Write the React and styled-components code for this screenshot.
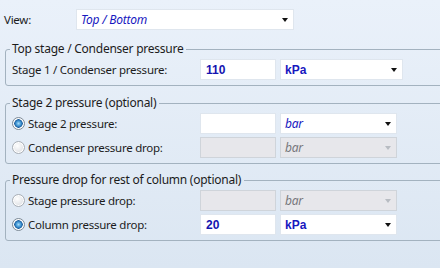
import React from 'react'
import styled, { createGlobalStyle } from 'styled-components'

const Global = createGlobalStyle`
    html, body {
        margin: 0;
        padding: 0;
    }
    body {
        font-family: "Noto Sans", "Open Sans", sans-serif;
        font-size: 11.5px;
        letter-spacing: -0.25px;
        color: #1c1c1c;
    }
`;

const Panel = styled.div`
    width: 440px;
    height: 268px;
    box-sizing: border-box;
    padding: 9px 0 0 4px;
    overflow: hidden;
    background: linear-gradient(#eaf1fa, #dbe6f2);
`;

const ViewRow = styled.div`
    display: flex;
    align-items: center;
    height: 21px;
    margin-bottom: 11px;
`;

const ViewLabel = styled.span`
    width: 72px;
`;

const Group = styled.fieldset`
    width: 460px;
    margin: 0 0 ${props => props.gap || 0}px 1px;
    padding: 2px 0 5px 6px;
    border: 1px solid #a3b2bf;
    border-radius: 3px;
    box-sizing: border-box;
    display: flex;
    flex-direction: column;
    gap: 3px;
`;

const Legend = styled.legend`
    margin-left: -2px;
    padding: 0 3px 0 2px;
    line-height: 16px;
    font-size: 12px;
`;

const Row = styled.div`
    display: flex;
    align-items: center;
    height: 21px;
`;

const Label = styled.label`
    width: 188px;
    display: flex;
    align-items: center;
    gap: 3px;
`;

const Radio = styled.span`
    width: 13px;
    height: 13px;
    box-sizing: border-box;
    border-radius: 50%;
    border: 1px solid ${props => props.checked ? '#7d8a96' : '#a9afb6'};
    background: ${props => props.checked
        ? 'radial-gradient(circle at 50% 50%, #a6dcf8 0, #3f95d4 2.5px, #1f5f9e 4px, #e9eef2 4.6px, #f6f8fa 100%)'
        : 'radial-gradient(circle at 40% 35%, #ffffff 0, #e4e6e9 60%, #d2d5d9 100%)'};
    box-shadow: inset 0 0 0 1px #ffffff;
`;

const TextBox = styled.div`
    width: 76px;
    height: 21px;
    box-sizing: border-box;
    padding: 0 5px;
    display: flex;
    align-items: center;
    border: 1px solid ${props => props.disabled ? '#cfd4da' : '#dfe6ee'};
    background: ${props => props.disabled ? '#e7e7eb' : '#ffffff'};
    color: #1414b0;
    font-size: 12px;
    letter-spacing: 0;
    font-weight: 700;
    font-family: "Liberation Sans", Arial, sans-serif;
`;

const Combo = styled.div`
    width: ${props => props.width}px;
    height: 21px;
    margin-left: ${props => props.offset ?? 4}px;
    box-sizing: border-box;
    padding: 0 5px 0 4px;
    display: flex;
    align-items: center;
    justify-content: space-between;
    border: 1px solid ${props => props.disabled ? '#cfd4da' : '#dfe6ee'};
    background: ${props => props.disabled ? '#e7e7eb' : '#ffffff'};
    color: ${props => props.disabled ? '#77777c' : '#1818c0'};
    font-size: 12px;
    font-style: ${props => props.bold ? 'normal' : 'italic'};
    font-weight: ${props => props.bold ? 700 : 400};
    letter-spacing: ${props => props.bold ? '0' : '-0.2px'};
    font-family: ${props => props.bold ? '"Liberation Sans", Arial, sans-serif' : 'inherit'};
`;

const Arrow = styled.span`
    width: 0;
    height: 0;
    border-left: 3.5px solid transparent;
    border-right: 3.5px solid transparent;
    border-top: 4px solid ${props => props.disabled ? '#b8bcc2' : '#111111'};
    margin-top: 1px;
`;

const Select = ({ value, width, bold, disabled, offset }) => (
    <Combo width={width} bold={bold} disabled={disabled} offset={offset}>
        <span>{value}</span>
        <Arrow disabled={disabled} />
    </Combo>
)

export default function App() {
    return (
        <Panel>
            <Global />
            <ViewRow>
                <ViewLabel>View:</ViewLabel>
                <Select value="Top / Bottom" width={218} offset={0} />
            </ViewRow>

            <Group gap={9}>
                <Legend>Top stage / Condenser pressure</Legend>
                <Row>
                    <Label>Stage 1 / Condenser pressure:</Label>
                    <TextBox>110</TextBox>
                    <Select value="kPa" width={123} bold />
                </Row>
            </Group>

            <Group gap={8}>
                <Legend>Stage 2 pressure (optional)</Legend>
                <Row>
                    <Label><Radio checked />Stage 2 pressure:</Label>
                    <TextBox />
                    <Select value="bar" width={117} />
                </Row>
                <Row>
                    <Label><Radio />Condenser pressure drop:</Label>
                    <TextBox disabled />
                    <Select value="bar" width={117} disabled />
                </Row>
            </Group>

            <Group>
                <Legend>Pressure drop for rest of column (optional)</Legend>
                <Row>
                    <Label><Radio />Stage pressure drop:</Label>
                    <TextBox disabled />
                    <Select value="bar" width={117} disabled />
                </Row>
                <Row>
                    <Label><Radio checked />Column pressure drop:</Label>
                    <TextBox>20</TextBox>
                    <Select value="kPa" width={117} bold />
                </Row>
            </Group>
        </Panel>
    )
}
